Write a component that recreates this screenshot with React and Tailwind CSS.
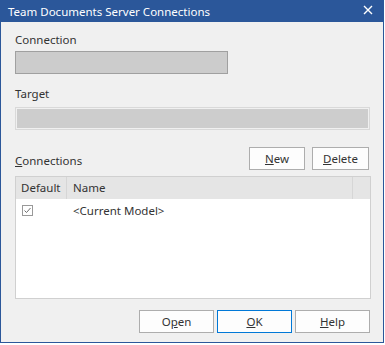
import React from 'react';

const font = { fontFamily: '"Noto Sans", "Open Sans", sans-serif' };

const Btn = ({ children, primary, className = '' }) => (
    <button
        className={`h-[23px] bg-[#fdfdfd] border text-[11.5px] text-[#333] leading-none flex items-center justify-center ${primary ? 'border-[#0078d7]' : 'border-[#adadad]'} ${className}`}
    >
        {children}
    </button>
);

export default function App() {
    return (
        <div className="w-[384px] h-[343px] bg-[#f0f0f0] border border-[#2b579a] flex flex-col text-[#333]" style={font}>
            {/* Title bar */}
            <div className="h-[21px] bg-[#2b579a] flex items-center justify-between pl-[7px] pr-[10px]">
                <span className="text-white text-[11.5px] leading-none">Team Documents Server Connections</span>
                <svg width="10" height="10" viewBox="0 0 10 10" className="mb-[3px]">
                    <path d="M1 1 L9 9 M9 1 L1 9" stroke="white" strokeWidth="1.4" />
                </svg>
            </div>

            <div className="flex flex-col px-[14px] text-[11.5px]">
                {/* Connection */}
                <div className="mt-[10px] leading-[16px]">Connection</div>
                <div className="mt-[3px] w-[213px] h-[23px] bg-[#cccccc] border border-[#a0a0a0]" />

                {/* Target */}
                <div className="mt-[12px] leading-[16px]">Target</div>
                <div className="mt-[5px] w-[355px] h-[23px] border border-[#d9d9d9] p-px">
                    <div className="w-full h-full bg-[#cdcdcd]" />
                </div>

                {/* Connections row */}
                <div className="mt-[17px] flex items-end justify-between w-[355px]">
                    <span className="leading-[16px] mb-[1px]"><u>C</u>onnections</span>
                    <div className="flex gap-[7px] mr-[1px]">
                        <Btn className="w-[56px]"><u>N</u>ew</Btn>
                        <Btn className="w-[57px]"><u>D</u>elete</Btn>
                    </div>
                </div>

                {/* List */}
                <div className="mt-[6px] w-[356px] h-[123px] bg-white border border-[#d0d0d0] flex flex-col">
                    <div className="h-[22px] bg-[#e5e5e5] flex items-center">
                        <div className="w-[51px] h-full pl-[5px] flex items-center border-r border-[#d6d6d6]">Default</div>
                        <div className="flex-1 h-full pl-[6px] flex items-center border-r border-[#d6d6d6]">Name</div>
                        <div className="w-[17px] h-full" />
                    </div>
                    <div className="h-[23px] flex items-center">
                        <div className="w-[51px] pl-[6px] flex items-center">
                            <div className="w-[11px] h-[11px] border border-[#999] bg-white flex items-center justify-center">
                                <svg width="9" height="9" viewBox="0 0 9 9">
                                    <path d="M1.5 4.5 L3.5 6.5 L7.5 2" stroke="#6d6d6d" strokeWidth="1" fill="none" />
                                </svg>
                            </div>
                        </div>
                        <div className="pl-[6px]">&lt;Current Model&gt;</div>
                    </div>
                </div>

                {/* Bottom buttons */}
                <div className="mt-[11px] flex justify-end gap-[3px] w-[355px]">
                    <Btn className="w-[75px]">O<u>p</u>en</Btn>
                    <Btn primary className="w-[75px]"><u>O</u>K</Btn>
                    <Btn className="w-[75px]"><u>H</u>elp</Btn>
                </div>
            </div>
        </div>
    );
}
